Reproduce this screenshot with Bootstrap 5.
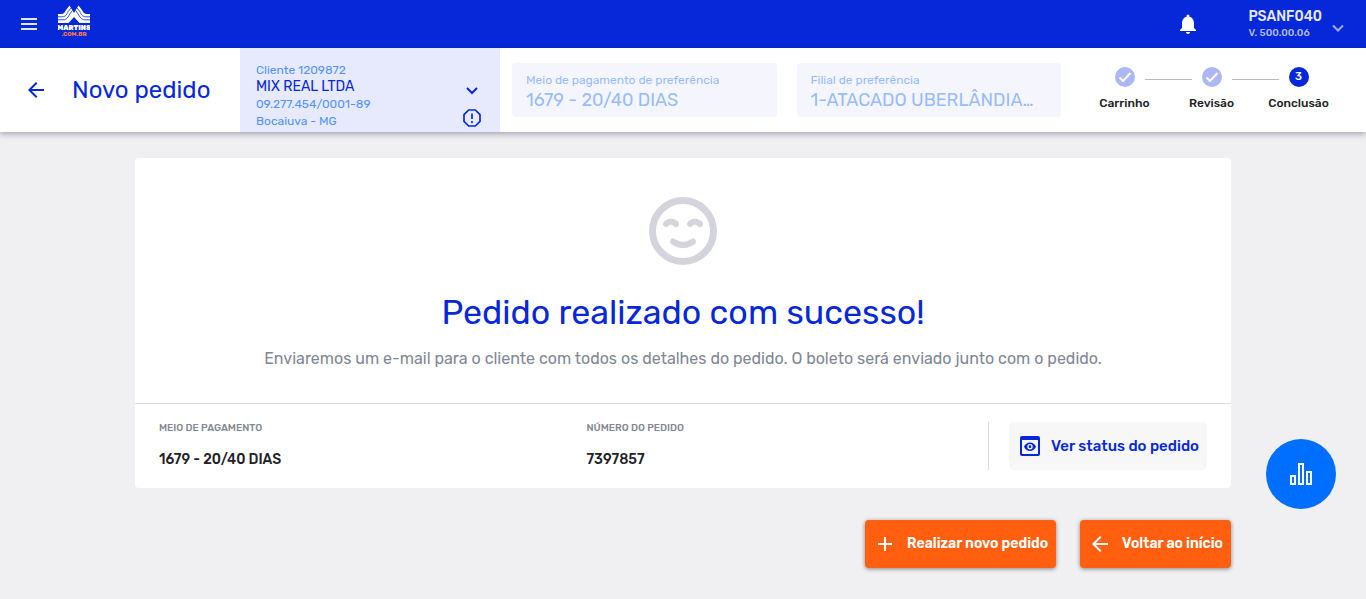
<!DOCTYPE html>
<html lang="pt-BR">
<head>
<meta charset="utf-8">
<meta name="viewport" content="width=device-width, initial-scale=1">
<title>Novo pedido</title>
<link rel="stylesheet" href="https://cdn.jsdelivr.net/npm/bootstrap@5.3.0/dist/css/bootstrap.min.css">
<style>
  :root { --brand: #0628d8; --soft: #5393ff; --accent: #ff5f0f; --gray: #7f8794; }
  body { background: #f0f0f2; color: #212126; font-family: Rubik, Roboto, sans-serif; font-size: 14px; line-height: 16px; }
  button { color: inherit; }
  svg { display: block; flex: none; }
  .topbar { background: var(--brand); height: 48px; color: #fff; }
  .logo { margin-left: 21px; }
  .account { margin-left: 48px; text-align: left; }
  .account-name { font-size: 14px; font-weight: 500; color: #e6eafb; }
  .account-version { font-size: 10px; font-weight: 500; color: #b4bff3; }
  .orderbar { height: 84px; box-shadow: 0 2px 6px rgba(20,20,60,.35); position: relative; color: var(--brand); }
  .heading-zone { width: 240px; padding-left: 24px; flex: none; }
  .page-title { font-size: 24px; line-height: 32px; font-weight: 400; }
  .client { width: 260px; flex: none; background: #e7eafc; padding: 14px 16px 0; font-size: 12px; color: var(--soft); text-align: left; }
  .client-name { font-size: 14px; line-height: 18px; color: var(--brand); }
  .client-lines { line-height: 17px; }
  .prefs { gap: 20px; padding-left: 12px; }
  .pref { background: #f5f6fd; border-radius: 4px; height: 54px; padding: 9px 14px; color: #97bcff; flex: 1 1 0; min-width: 0; }
  .pref label { font-size: 12px; }
  .pref input { border: 0; background: none; padding: 0; color: inherit; font-size: 18px; line-height: 24px; height: 24px; width: 100%; display: block; text-overflow: ellipsis; }
  .steps { width: 261px; margin-right: 24px; margin-left: 20px; padding-top: 19px; color: #212126; font-size: 12px; font-weight: 500; flex: none; }
  .step-rule { height: 1px; flex: 1; background: #babac0; margin-top: 4px; }
  .dot { width: 20px; height: 20px; border-radius: 50%; margin: 0 10px; background: #acb7f3; color: #fff; font-size: 11px; }
  .dot-current { background: var(--brand); }
  .content-width { max-width: 1096px; }
  .panel { border-radius: 4px; margin-top: 26px; }
  .panel-message { padding: 39px 24px 32px; }
  .success-title { font-size: 34px; line-height: 44px; font-weight: 400; color: var(--brand); margin: 26px 0 12px; }
  .success-text { font-size: 16px; line-height: 24px; color: var(--gray); }
  .panel-facts { border-top: 1px solid #dcdce0; padding: 18px 24px; }
  .facts { gap: 26px; }
  .fact { flex: 1 1 0; }
  .fact dt { font-size: 10px; line-height: 12px; font-weight: 500; color: var(--gray); margin-bottom: 18px; }
  .fact dd { font-weight: 500; margin: 0; }
  .status-zone { border-left: 1px solid #dcdce0; padding-left: 20px; }
  .status-button { height: 48px; width: 198px; padding: 0 8px 0 9px; background: #f7f7f8; color: var(--brand); border-radius: 4px; font-size: 15px; font-weight: 500; }
  .action-button { height: 48px; padding: 0 8px; gap: 10px; background: var(--accent); color: #fff; border-radius: 4px; font-size: 14px; font-weight: 600; box-shadow: 0 1px 4px rgba(0,0,0,.45); }
  .chart-button { position: fixed; right: 30px; bottom: 90px; width: 70px; height: 70px; background: #006eff; color: #fff; }
</style>
</head>
<body>
<header>
  <div class="topbar d-flex align-items-center px-3">
    <button class="btn p-0 border-0 ms-1" type="button" aria-label="Menu">
      <svg width="17" height="14" viewBox="0 0 17 14"><path d="M1 2h16M1 7h16M1 12h16" stroke="#e3e8fd" stroke-width="2"/></svg>
    </button>
    <a href="#" class="logo align-self-start pt-1" aria-label="Martins.com.br">
      <svg width="32" height="34" viewBox="0 0 32 34">
        <path fill="#fff" d="M0 10h3c3 0 4-2 5-4l3.500-4.500L16 9l4.500-7.500L24 6c1 2 2 4 5 4h3v9H21.500L16 13l-5.500 6H0z"/>
        <path fill="none" stroke="#0628d8" stroke-width=".8" d="M0 12.800h4c4 0 5-3 6-5l3-4M0 15.800h5c4 0 5-3 7-6l2.500-3.500M32 12.800h-4c-4 0-5-3-6-5l-3-4M32 15.800h-5c-4 0-5-3-7-6l-2.500-3.500"/>
        <text x="16" y="26" text-anchor="middle" fill="#fff" font-family="Rubik, sans-serif" font-size="7" font-weight="900">MARTINS</text>
        <text x="16" y="32" text-anchor="middle" fill="#ff7c4a" font-family="Rubik, sans-serif" font-size="6" font-weight="700">.COM.BR</text>
      </svg>
    </a>
    <button class="btn p-0 border-0 ms-auto text-white" type="button" aria-label="Notificações">
      <svg width="24" height="24" viewBox="0 0 24 24" fill="currentColor"><path d="M12 22c1.100 0 2-.9 2-2h-4c0 1.100.9 2 2 2zm6-6v-5c0-3.070-1.640-5.640-4.500-6.320V4a1.500 1.500 0 0 0-3 0v.680C7.630 5.360 6 7.920 6 11v5l-2 2v1h16v-1z"/></svg>
    </button>
    <button class="account btn p-0 border-0 d-flex align-items-center" type="button">
      <span class="d-flex flex-column gap-1">
        <span class="account-name lh-1">PSANF040</span>
        <span class="account-version lh-1">V. 500.00.06</span>
      </span>
      <svg class="ms-1 mt-2" width="24" height="24" viewBox="0 0 24 24" fill="none" stroke="#9faef3" stroke-width="2"><path d="m7 9.500 5 5 5-5"/></svg>
    </button>
  </div>
  <div class="orderbar bg-white d-flex">
    <div class="heading-zone d-flex align-items-center">
      <a href="#" aria-label="Voltar" class="text-reset"><svg width="24" height="24" viewBox="0 0 24 24" fill="currentColor"><path d="M20 11H7.830l5.590-5.590L12 4l-8 8 8 8 1.410-1.410L7.830 13H20z"/></svg></a>
      <h1 class="page-title mb-0 ms-4">Novo pedido</h1>
    </div>
    <button class="client border-0 d-flex justify-content-between" type="button">
      <span class="d-flex flex-column">
        <span>Cliente 1209872</span>
        <span class="client-name">MIX REAL LTDA</span>
        <span class="client-lines">09.277.454/0001-89</span>
        <span class="client-lines">Bocaiuva - MG</span>
      </span>
      <span class="d-flex flex-column gap-1 pt-3">
        <svg width="24" height="24" viewBox="0 0 24 24" fill="none" stroke="#0628d8" stroke-width="2"><path d="m7 10 5 5 5-5"/></svg>
        <svg width="24" height="24" viewBox="0 0 24 24" fill="none" stroke="#0628d8" stroke-width="1.700"><path d="M8.700 4h6.600L20 8.700v6.600L15.300 20H8.700L4 15.300V8.700zM12 7.500v5.500M12 15v2"/></svg>
      </span>
    </button>
    <div class="prefs d-flex flex-fill align-items-center">
      <div class="pref"><label class="d-block" for="payment">Meio de pagamento de preferência</label><input id="payment" value="1679 - 20/40 DIAS" readonly></div>
      <div class="pref"><label class="d-block" for="branch">Filial de preferência</label><input id="branch" value="1-ATACADO UBERLÂNDIA…" readonly></div>
    </div>
    <ol class="steps list-unstyled d-flex mb-0 text-center">
      <li class="flex-fill w-100">
        <div class="d-flex align-items-center mb-2"><span class="step-rule invisible"></span>
          <span class="dot"><svg width="20" height="20" viewBox="0 0 20 20" fill="none" stroke="#fff" stroke-width="2"><path d="m4.500 10.500 3.500 3.500 7.500-8"/></svg></span>
          <span class="step-rule"></span></div>Carrinho
      </li>
      <li class="flex-fill w-100">
        <div class="d-flex align-items-center mb-2"><span class="step-rule"></span>
          <span class="dot"><svg width="20" height="20" viewBox="0 0 20 20" fill="none" stroke="#fff" stroke-width="2"><path d="m4.500 10.500 3.500 3.500 7.500-8"/></svg></span>
          <span class="step-rule"></span></div>Revisão
      </li>
      <li class="flex-fill w-100">
        <div class="d-flex align-items-center mb-2"><span class="step-rule"></span>
          <span class="dot dot-current d-flex align-items-center justify-content-center">3</span>
          <span class="step-rule invisible"></span></div>Conclusão
      </li>
    </ol>
  </div>
</header>
<main class="content-width mx-auto">
  <section class="panel bg-white">
    <div class="panel-message text-center">
      <svg class="mx-auto" width="68" height="68" viewBox="0 0 68 68" fill="none" stroke="#d4d5dc" stroke-linecap="round"><circle cx="34" cy="34" r="30.500" stroke-width="7"/><path stroke-width="6" d="M17 27c2-3 8-3 10 0M41 27c2-3 8-3 10 0M24 44.500c6 4.500 14 4.500 20 0"/></svg>
      <h2 class="success-title">Pedido realizado com sucesso!</h2>
      <p class="success-text mb-0">Enviaremos um e-mail para o cliente com todos os detalhes do pedido. O boleto será enviado junto com o pedido.</p>
    </div>
    <div class="panel-facts d-flex">
      <dl class="facts d-flex flex-fill mb-0">
        <div class="fact"><dt>MEIO DE PAGAMENTO</dt><dd>1679 - 20/40 DIAS</dd></div>
        <div class="fact"><dt>NÚMERO DO PEDIDO</dt><dd>7397857</dd></div>
      </dl>
      <div class="status-zone">
        <button class="status-button border-0 d-flex align-items-center justify-content-between" type="button">
          <svg width="24" height="24" viewBox="0 0 24 24"><path fill="#0628d8" fill-rule="evenodd" d="M4 2h16a2 2 0 0 1 2 2v16a2 2 0 0 1-2 2H4a2 2 0 0 1-2-2V4c0-1.100.9-2 2-2zm0 4v14h16V6zm8 2.500c2.730 0 5.060 1.660 6 4.200-.94 2.540-3.270 4.200-6 4.200s-5.060-1.660-6-4.200c.94-2.540 3.270-4.200 6-4.200zm0 1.500a2.700 2.700 0 1 0 0 5.400 2.700 2.700 0 0 0 0-5.400zm0 1.300a1.400 1.400 0 1 1 0 2.800 1.400 1.400 0 0 1 0-2.800z"/></svg>
          <span>Ver status do pedido</span>
        </button>
      </div>
    </div>
  </section>
  <div class="d-flex justify-content-end gap-4 my-4 pt-2">
    <button class="action-button border-0 d-flex align-items-center" type="button">
      <svg width="24" height="24" viewBox="0 0 24 24" stroke="currentColor" stroke-width="2"><path d="M5 12h14M12 5v14"/></svg>Realizar novo pedido
    </button>
    <button class="action-button border-0 d-flex align-items-center" type="button">
      <svg width="24" height="24" viewBox="0 0 24 24" fill="currentColor"><path d="M20 11H7.830l5.590-5.590L12 4l-8 8 8 8 1.410-1.410L7.830 13H20z"/></svg>Voltar ao início
    </button>
  </div>
</main>
<button class="chart-button border-0 rounded-circle d-flex align-items-center justify-content-center" type="button" aria-label="Indicadores">
  <svg width="24" height="24" viewBox="0 0 24 24" fill="none" stroke="currentColor" stroke-width="2"><path d="M2 14h4v8H2zM10 2h4v20h-4zM18 10h4v12h-4z"/></svg>
</button>
<script src="https://cdn.jsdelivr.net/npm/bootstrap@5.3.0/dist/js/bootstrap.bundle.min.js"></script>
</body>
</html>
